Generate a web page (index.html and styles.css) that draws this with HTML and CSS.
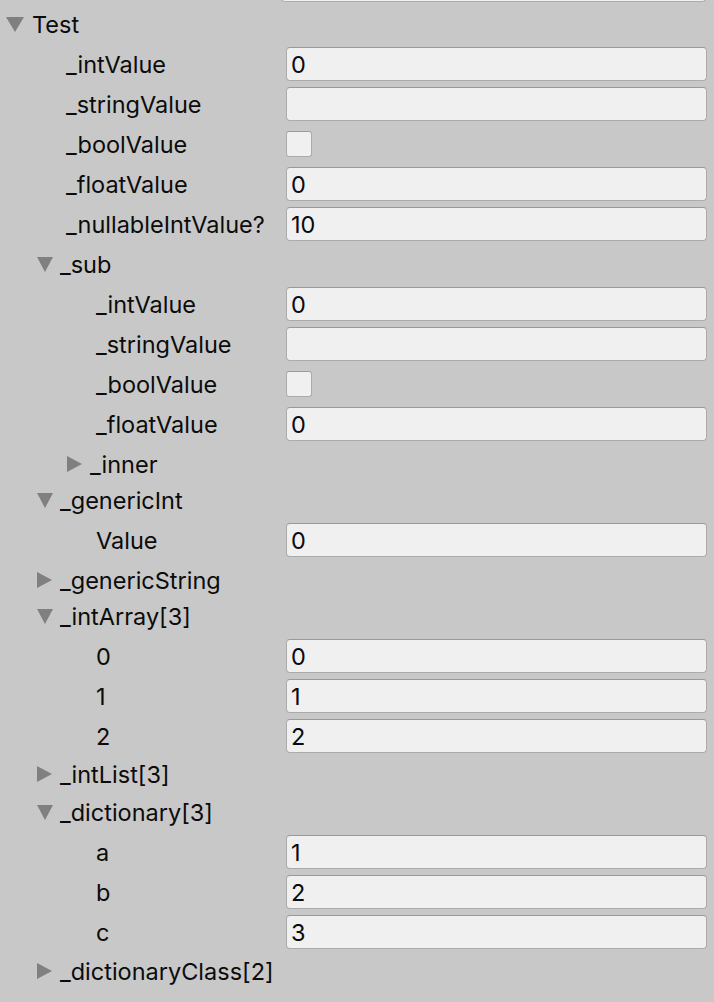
FILE: index.html
```html
<!DOCTYPE html>
<html>
<head>
<meta charset="utf-8">
<link rel="stylesheet" href="styles.css">
</head>
<body>
<div class="inspector">
  <div class="top-strip"><div class="field prev"></div></div>

  <div class="row fold l0"><span class="tri down"></span><span class="ftext">Test</span></div>
  <div class="row"><span class="label l1">_intValue</span><span class="field">0</span></div>
  <div class="row"><span class="label l1">_stringValue</span><span class="field"></span></div>
  <div class="row"><span class="label l1">_boolValue</span><span class="check"></span></div>
  <div class="row"><span class="label l1">_floatValue</span><span class="field">0</span></div>
  <div class="row"><span class="label l1">_nullableIntValue?</span><span class="field">10</span></div>

  <div class="row fold l1"><span class="tri down"></span><span class="ftext">_sub</span></div>
  <div class="row"><span class="label l2">_intValue</span><span class="field">0</span></div>
  <div class="row"><span class="label l2">_stringValue</span><span class="field"></span></div>
  <div class="row"><span class="label l2">_boolValue</span><span class="check"></span></div>
  <div class="row"><span class="label l2">_floatValue</span><span class="field">0</span></div>
  <div class="row fold l2 short"><span class="tri right"></span><span class="ftext">_inner</span></div>

  <div class="row fold l1"><span class="tri down"></span><span class="ftext">_genericInt</span></div>
  <div class="row"><span class="label l2">Value</span><span class="field">0</span></div>

  <div class="row fold l1 short"><span class="tri right"></span><span class="ftext">_genericString</span></div>

  <div class="row fold l1"><span class="tri down"></span><span class="ftext">_intArray[3]</span></div>
  <div class="row"><span class="label l2">0</span><span class="field">0</span></div>
  <div class="row"><span class="label l2">1</span><span class="field">1</span></div>
  <div class="row mid"><span class="label l2">2</span><span class="field">2</span></div>

  <div class="row fold l1 mid"><span class="tri right"></span><span class="ftext">_intList[3]</span></div>

  <div class="row fold l1"><span class="tri down"></span><span class="ftext">_dictionary[3]</span></div>
  <div class="row"><span class="label l2">a</span><span class="field">1</span></div>
  <div class="row"><span class="label l2">b</span><span class="field">2</span></div>
  <div class="row one"><span class="label l2">c</span><span class="field">3</span></div>

  <div class="row fold l1"><span class="tri right"></span><span class="ftext">_dictionaryClass[2]</span></div>
</div>
</body>
</html>
```
FILE: styles.css
```css
html, body {
  margin: 0;
  padding: 0;
  background: #c8c8c8;
}
body {
  width: 714px;
  height: 1002px;
  overflow: hidden;
  font-family: "Inter", "Noto Sans", sans-serif;
  font-size: 23.5px;
  color: #0b0b0b;
}
.inspector {
  display: flex;
  flex-direction: column;
}
.top-strip {
  height: 4px;
  overflow: hidden;
  display: flex;
  align-items: flex-end;
}
.field.prev {
  flex: none;
  margin-left: 281px;
  width: 425px;
  height: 34px;
  margin-bottom: 2px;
}
.row {
  height: 40px;
  display: flex;
  align-items: center;
  flex: none;
}
.row.short { margin-bottom: -4px; }
.row.mid { margin-bottom: -2px; }
.row.one { margin-bottom: -1px; }
.label {
  width: 286px;
  box-sizing: border-box;
  flex: none;
  white-space: nowrap;
  padding-top: 1px;
}
.label.l1 { padding-left: 66px; }
.label.l2 { padding-left: 96px; }
.field {
  flex: 1;
  height: 34px;
  box-sizing: border-box;
  margin-right: 7px;
  background: #f0f0f0;
  border: 1px solid #ababab;
  border-top-color: #999999;
  border-radius: 4px;
  padding-left: 4px;
  padding-top: 1px;
  display: flex;
  align-items: center;
}
.check {
  width: 26px;
  height: 26px;
  box-sizing: border-box;
  background: #f0f0f0;
  border: 1px solid #ababab;
  border-top-color: #9b9b9b;
  border-radius: 3px;
}
.fold .tri {
  flex: none;
  width: 0;
  height: 0;
}
.tri.down {
  border-left: 8px solid transparent;
  border-right: 8px solid transparent;
  border-top: 15px solid #808080;
}
.tri.right {
  border-top: 8px solid transparent;
  border-bottom: 8px solid transparent;
  border-left: 15px solid #808080;
}
.fold.l0 { padding-left: 7px; }
.fold.l0 .tri.down { border-left-width: 9px; border-right-width: 9px; margin-left: -1px; margin-right: 8px; }
.fold.l1 { padding-left: 37px; }
.fold.l1 .tri.down { margin-right: 7px; }
.fold.l1 .tri.right { margin-right: 8px; }
.fold.l2 { padding-left: 67px; }
.fold.l2 .tri.right { margin-right: 8px; }
.ftext { white-space: nowrap; }
```
